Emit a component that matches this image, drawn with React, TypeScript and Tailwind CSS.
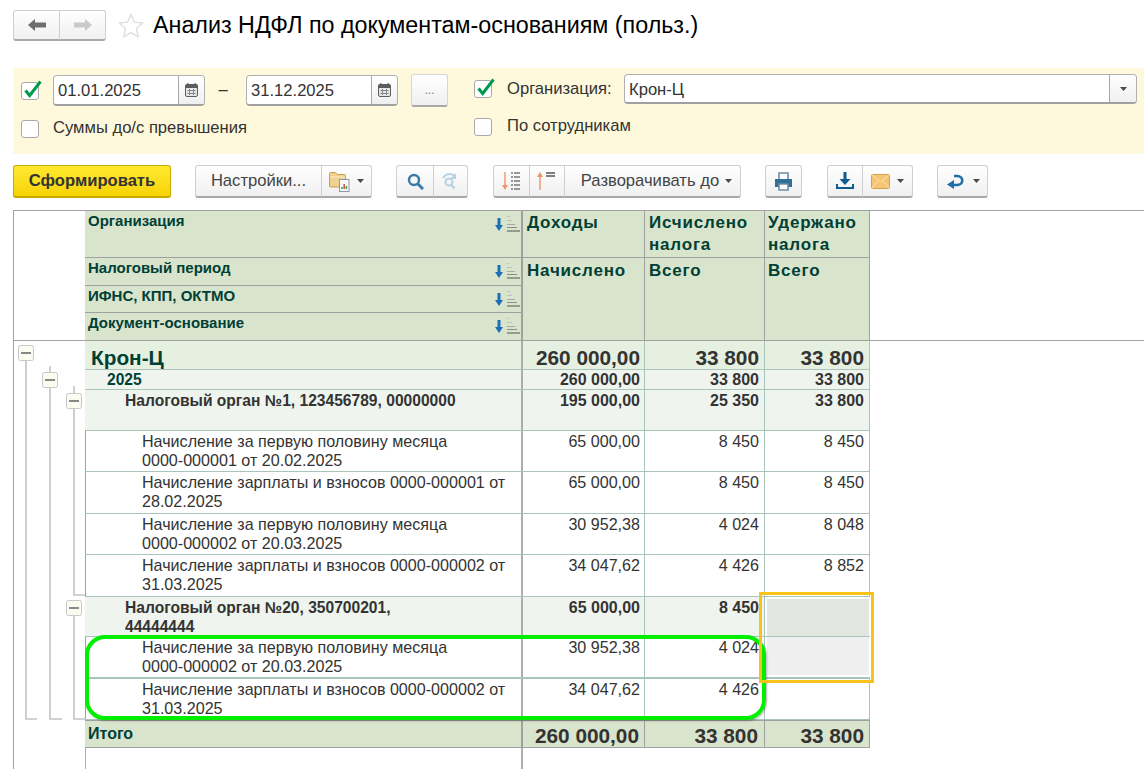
import type { ReactNode } from "react";

type Row = {
  label: string;
  values: [string, string, string];
  labelCls: string;
  rowCls: string;
  numCls: string;
  cellBg?: string;
};

const level0 = "text-[20.8px] font-bold text-[#333]";
const level1 = "text-[16px] font-bold text-[#333]";
const plain = "text-[16.1px] text-[#333]";
const docLabel = "pl-[56px] pt-[1px] text-[16.1px] text-[#333] border-l border-l-[#a0a0a0]";
const orgLabel = "pl-[40px] pt-[1px] text-[15.6px] font-bold text-[#333]";

const rows: Row[] = [
  { label: "Крон-Ц", values: ["260 000,00", "33 800", "33 800"], labelCls: "pl-[6px] pt-[7px] text-[20.8px] font-bold text-[#004035]", rowCls: "h-[29px] bg-[#e6f0e0]", numCls: `${level0} pt-[7px]` },
  { label: "2025", values: ["260 000,00", "33 800", "33 800"], labelCls: "pl-[22px] text-[15.6px] font-bold text-[#004035]", rowCls: "h-[20px] bg-[#eff5ee]", numCls: level1 },
  { label: "Налоговый орган №1, 123456789, 00000000", values: ["195 000,00", "25 350", "33 800"], labelCls: orgLabel, rowCls: "h-[41px] bg-[#eff5ee]", numCls: `${level1} pt-[1px]` },
  { label: "Начисление за первую половину месяца\n0000-000001 от 20.02.2025", values: ["65 000,00", "8 450", "8 450"], labelCls: docLabel, rowCls: "h-[41px] bg-white", numCls: `${plain} pt-[1px]` },
  { label: "Начисление зарплаты и взносов 0000-000001 от\n28.02.2025", values: ["65 000,00", "8 450", "8 450"], labelCls: docLabel, rowCls: "h-[42px] bg-white", numCls: `${plain} pt-[1px]` },
  { label: "Начисление за первую половину месяца\n0000-000002 от 20.03.2025", values: ["30 952,38", "4 024", "8 048"], labelCls: docLabel, rowCls: "h-[41px] bg-white", numCls: `${plain} pt-[1px]` },
  { label: "Начисление зарплаты и взносов 0000-000002 от\n31.03.2025", values: ["34 047,62", "4 426", "8 852"], labelCls: docLabel, rowCls: "h-[42px] bg-white", numCls: `${plain} pt-[1px]` },
  { label: "Налоговый орган №20, 350700201,\n44444444", values: ["65 000,00", "8 450", ""], labelCls: orgLabel, rowCls: "h-[40px] bg-[#eff5ee]", numCls: `${level1} pt-[1px]`, cellBg: "bg-[#e1e7e0] border-t-2 border-x-2 border-white" },
  { label: "Начисление за первую половину месяца\n0000-000002 от 20.03.2025", values: ["30 952,38", "4 024", ""], labelCls: docLabel, rowCls: "h-[42px] bg-white border-b-2!", numCls: `${plain} pt-[1px]`, cellBg: "bg-[#efefef] border-b-2 border-x-2 border-white" },
  { label: "Начисление зарплаты и взносов 0000-000002 от\n31.03.2025", values: ["34 047,62", "4 426", ""], labelCls: docLabel, rowCls: "h-[41px] bg-white", numCls: `${plain} pt-[1px]` },
];

function Btn({ w, children, className }: { w: string; children: ReactNode; className?: string }) {
  return (
    <div className={`${w} h-full flex items-center justify-center bg-linear-to-b from-white to-[#f0f0f0] border border-[#cfcfcf] border-b-2 border-b-[#a8a8a8] -ml-px first:ml-0 first:rounded-l-[3px] last:rounded-r-[3px] ${className ?? ""}`}>
      {children}
    </div>
  );
}

function Caret() {
  return (
    <svg width="7" height="4" viewBox="0 0 7 4" className="shrink-0">
      <path d="M0 0h7L3.5 4z" fill="#4a4a4a" />
    </svg>
  );
}

function Checkbox({ checked }: { checked?: boolean }) {
  return (
    <div className="relative w-[18px] h-[18px] shrink-0 rounded-[3px] bg-white border border-[#a9a9a9]">
      {checked && (
        <svg width="22" height="20" viewBox="0 0 22 20" className="absolute left-0 -top-[3px]">
          <path d="M3.500 10.500l4.200 5L18.500 1.500" fill="none" stroke="#009a4e" strokeWidth="3" />
        </svg>
      )}
    </div>
  );
}

function CalendarIcon() {
  return (
    <svg width="13" height="14" viewBox="0 0 13 14">
      <rect x="0.5" y="1.5" width="12" height="12" rx="1.5" fill="#e6e6e6" stroke="#5c5c5c" />
      <rect x="0.5" y="1.5" width="12" height="3.5" fill="#5c5c5c" />
      <path d="M3 0v2M10 0v2" stroke="#5c5c5c" strokeWidth="1.2" />
      <path d="M2.5 7.5h8M2.5 10.5h8M4.5 6v6M8.5 6v6" stroke="#8a8a8a" strokeWidth="1" />
    </svg>
  );
}

function DateField({ value }: { value: string }) {
  return (
    <div className="w-[152px] h-[31px] flex rounded-[4px] bg-white border border-[#b0b0b0] border-b-2 border-b-[#a0a0a0] overflow-hidden">
      <div className="flex-1 pl-[4px] leading-[30px] text-[#333]">{value}</div>
      <div className="w-[26px] flex items-center justify-center bg-linear-to-b from-white to-[#f0f0f0] border-l border-[#a8a8a8]">
        <CalendarIcon />
      </div>
    </div>
  );
}

function SortMark() {
  return (
    <svg width="26" height="17" viewBox="0 0 26 17" className="shrink-0">
      <path d="M5 3v9" stroke="#1b6fb5" strokeWidth="3" />
      <path d="M1 10h8l-4 6z" fill="#1b6fb5" />
      <path d="M13 1.500h3" stroke="#c4c4c4" />
      <path d="M13 5.500h5" stroke="#c0c0c0" />
      <path d="M13 9.500h8" stroke="#a8a8a8" />
      <path d="M13 12.500h10" stroke="#8c8c8c" />
      <path d="M13 16h13" stroke="#555" />
    </svg>
  );
}

function Hdr({ children, cls }: { children: ReactNode; cls: string }) {
  return (
    <div className={`flex justify-between pl-[3px] pr-px border-b border-[#a0a0a0] text-[15px] font-bold text-[#004035] ${cls}`}>
      <span className="leading-[16px] pt-[2px]">{children}</span>
      <div className="pt-[4px]">
        <SortMark />
      </div>
    </div>
  );
}

function TreeBox({ x, y }: { x: number; y: number }) {
  return (
    <g>
      <rect x={x + 0.5} y={y + 0.5} width="15" height="15" rx="2" fill="#fcfbf0" stroke="#c8c8c8" />
      <path d={`M${x + 3} ${y + 8}h10`} stroke="#6a6a6a" strokeWidth="1.6" />
    </g>
  );
}

function Tree() {
  return (
    <svg width="71" height="428" viewBox="14 341 71 428" className="shrink-0">
      <g fill="none" stroke="#c4c4c4" strokeWidth="1.6">
        <path d="M26 361V719H37" />
        <path d="M50 366V719H62" />
        <path d="M74 386V595H85" />
        <path d="M74 612V719H85" />
      </g>
      <TreeBox x={18} y={345} />
      <TreeBox x={42} y={372} />
      <TreeBox x={66} y={393} />
      <TreeBox x={66} y={600} />
    </svg>
  );
}

export default function App() {
  return (
    <div className="relative w-[1144px] h-[769px] overflow-hidden bg-white font-['Liberation_Sans',sans-serif]">
      {/* title */}
      <div className="h-[68px] pl-[13px] pt-[10px] flex items-start">
        <div className="flex h-[31px] w-[93px]">
          <Btn w="w-[47px]">
            <svg width="18" height="12" viewBox="0 0 18 12">
              <path d="M0 6l7-6v3.5h11v5H7V12z" fill="#6e6e6e" />
            </svg>
          </Btn>
          <Btn w="w-[47px]">
            <svg width="18" height="12" viewBox="0 0 18 12">
              <path d="M18 6l-7-6v3.5H0v5h11V12z" fill="#c9c9c9" />
            </svg>
          </Btn>
        </div>
        <svg width="26" height="26" viewBox="0 0 26 26" className="ml-[12px] mt-[3px]">
          <path d="M13 1.5l3.4 7.6 8.1.9-6 5.6 1.7 8.2-7.2-4.2-7.2 4.2 1.7-8.2-6-5.6 8.1-.9z" fill="#fff" stroke="#dedede" strokeWidth="1.4" />
        </svg>
        <h1 className="ml-[9px] text-[23.3px] leading-[32px] text-black -mt-[1px]">Анализ НДФЛ по документам-основаниям (польз.)</h1>
      </div>

      {/* filter panel */}
      <div className="ml-[13px] h-[86px] bg-[#fef9dc] flex text-[16.6px] text-[#333]">
        <div className="w-[461px] pl-[8px]">
          <div className="flex items-start mt-[7px]">
            <div className="pt-[7px] w-[32px]">
              <Checkbox checked />
            </div>
            <DateField value="01.01.2025" />
            <div className="w-[41px] pr-[5px] text-center leading-[30px]">–</div>
            <DateField value="31.12.2025" />
            <div className="ml-[13px] -mt-px w-[37px] h-[33px] flex items-center justify-center bg-linear-to-b from-white to-[#f0f0f0] border border-[#d6d6d6] border-b-2 border-b-[#a8a8a8] rounded-[3px] text-[12px] text-[#777]">
              ...
            </div>
          </div>
          <div className="flex items-center mt-[10px]">
            <div className="w-[32px]">
              <Checkbox />
            </div>
            <span className="-mt-[1px]">Суммы до/с превышения</span>
          </div>
        </div>
        <div className="flex-1">
          <div className="flex items-start mt-[6px]">
            <div className="pt-[6px] w-[33px]">
              <Checkbox checked />
            </div>
            <span className="leading-[29px] w-[117px]">Организация:</span>
            <div className="w-[513px] h-[30px] flex rounded-[4px] bg-white border border-[#b0b0b0] border-b-2 border-b-[#a0a0a0] overflow-hidden">
              <div className="flex-1 pl-[4px] leading-[29px]">Крон-Ц</div>
              <div className="w-[27px] flex items-center justify-center bg-linear-to-b from-white to-[#f0f0f0] border-l border-[#a8a8a8]">
                <Caret />
              </div>
            </div>
          </div>
          <div className="flex items-center mt-[11px]">
            <div className="w-[33px]">
              <Checkbox />
            </div>
            <span className="-mt-[1px]">По сотрудникам</span>
          </div>
        </div>
      </div>

      {/* toolbar */}
      <div className="ml-[13px] mt-[11px] h-[33px] flex text-[16.6px] text-[#444]">
        <div className="w-[158px] h-full flex items-center justify-center rounded-[3px] bg-linear-to-b from-[#ffe92e] to-[#f7d300] border border-[#c9a800] border-b-2 font-bold text-[#333]">
          <span className="pt-[1px]">Сформировать</span>
        </div>
        <div className="flex h-full ml-[24px]">
          <Btn w="w-[127px]">
            <span className="pt-[1px]">Настройки...</span>
          </Btn>
          <Btn w="w-[51px]" className="gap-[7px]">
            <svg width="21" height="21" viewBox="0 0 21 21">
              <path d="M0.500 2.500a1 1 0 0 1 1-1h5l2 2h7a1 1 0 0 1 1 1V16H1.500a1 1 0 0 1-1-1z" fill="#efd08c" stroke="#c9a04e" />
              <path d="M1 6h15" stroke="#f7e4b5" strokeWidth="1.500" />
              <rect x="10.500" y="8.500" width="9.500" height="12" fill="#f7f7f7" stroke="#8d9aa6" />
              <path d="M13 18v-2" stroke="#3f9a5b" strokeWidth="1.500" />
              <path d="M15.200 18v-5" stroke="#c8553d" strokeWidth="1.500" />
              <path d="M17.400 18v-3" stroke="#3f9a5b" strokeWidth="1.500" />
            </svg>
            <Caret />
          </Btn>
        </div>
        <div className="flex h-full ml-[24px]">
          <Btn w="w-[38px]">
            <svg width="17" height="17" viewBox="0 0 17 17">
              <circle cx="7" cy="7" r="5" fill="none" stroke="#3a7ca8" strokeWidth="2.400" />
              <path d="M10.500 10.500L16 16" stroke="#3a7ca8" strokeWidth="3" />
            </svg>
          </Btn>
          <Btn w="w-[35px]">
            <svg width="20" height="17" viewBox="0 0 20 17">
              <path d="M2 5c3-5 9-5 12-1" fill="none" stroke="#b5d3e3" strokeWidth="2" />
              <path d="M15 0v6h-6z" fill="#b5d3e3" />
              <circle cx="8" cy="9" r="3.500" fill="none" stroke="#b5d3e3" strokeWidth="2" />
              <path d="M10.500 12l3 3.500" stroke="#b5d3e3" strokeWidth="2.400" />
            </svg>
          </Btn>
        </div>
        <div className="flex h-full ml-[25px]">
          <Btn w="w-[37px]">
            <svg width="20" height="20" viewBox="0 0 20 20">
              <path d="M3 1v15" stroke="#f0936a" strokeWidth="1.400" />
              <path d="M0 14h6l-3 5z" fill="#f0936a" />
              <path d="M9 2h9M9 6h9M9 10h9M9 14h9M9 18h9" stroke="#777" strokeWidth="1.500" strokeDasharray="2 1 8" />
            </svg>
          </Btn>
          <Btn w="w-[36px]">
            <svg width="20" height="20" viewBox="0 0 20 20">
              <path d="M3 19V4" stroke="#f0936a" strokeWidth="1.400" />
              <path d="M0 6h6L3 1z" fill="#f0936a" />
              <path d="M9 2h9M9 5h9" stroke="#555" strokeWidth="1.600" />
            </svg>
          </Btn>
          <Btn w="w-[177px]" className="gap-[6px] pl-[8px]">
            <span className="pt-[1px]">Разворачивать до</span>
            <Caret />
          </Btn>
        </div>
        <div className="flex h-full ml-[24px]">
          <Btn w="w-[37px]">
            <svg width="19" height="19" viewBox="0 0 19 19">
              <path d="M5 7V1h9v6" fill="#fff" stroke="#6f8ba3" strokeWidth="1.600" />
              <path d="M1 7h17v8H1z" fill="#2f6f99" />
              <path d="M5 12h9v6H5z" fill="#fff" stroke="#6f8ba3" strokeWidth="1.600" />
            </svg>
          </Btn>
        </div>
        <div className="flex h-full ml-[25px]">
          <Btn w="w-[36px]">
            <svg width="18" height="18" viewBox="0 0 18 18">
              <path d="M9 0v8" stroke="#0f5c91" strokeWidth="3" />
              <path d="M3.500 7h11L9 13z" fill="#0f5c91" />
              <path d="M1 12v4h16v-4" fill="none" stroke="#0f5c91" strokeWidth="2" />
            </svg>
          </Btn>
          <Btn w="w-[51px]" className="gap-[7px]">
            <svg width="19" height="15" viewBox="0 0 19 15">
              <rect x="0.500" y="0.500" width="18" height="14" rx="1" fill="#f4c674" stroke="#d9a24f" />
              <path d="M1 1l8.500 7L18 1M1 14l6-7M18 14l-6-7" fill="none" stroke="#fbe3ad" />
            </svg>
            <Caret />
          </Btn>
        </div>
        <div className="flex h-full ml-[24px]">
          <Btn w="w-[51px]" className="gap-[9px]">
            <svg width="18" height="16" viewBox="0 0 18 16">
              <path d="M7 12h4c7 0 7-9 0-9H8" fill="none" stroke="#1f6ea6" strokeWidth="2.600" />
              <path d="M8 7v9L1 11.500z" fill="#1f6ea6" />
            </svg>
            <Caret />
          </Btn>
        </div>
      </div>

      {/* report */}
      <div className="ml-[13px] mt-[12px] border-l border-[#a0a0a0]">
        <div className="flex h-[131px] border-y border-[#a0a0a0]">
          <div className="w-[71px] shrink-0" />
          <div className="w-[438px] shrink-0 flex flex-col bg-[#d9e4cc] border-r-2 border-[#a0a0a0]">
            <Hdr cls="h-[47px]">Организация</Hdr>
            <Hdr cls="h-[28px]">Налоговый период</Hdr>
            <Hdr cls="h-[27px]">ИФНС, КПП, ОКТМО</Hdr>
            <div className="flex-1 flex justify-between pl-[3px] pr-px text-[15px] font-bold text-[#004035]">
              <span className="leading-[16px] pt-[2px]">Документ-основание</span>
              <div className="pt-[4px]">
                <SortMark />
              </div>
            </div>
          </div>
          {[
            { w: "w-[122px] pl-[4px]", top: "Доходы", bottom: "Начислено" },
            { w: "w-[120px] pl-[4px]", top: "Исчислено\nналога", bottom: "Всего" },
            { w: "w-[105px] pl-[3px]", top: "Удержано\nналога", bottom: "Всего" },
          ].map((c) => (
            <div key={c.top} className={`${c.w} shrink-0 flex flex-col bg-[#d9e4cc] border-r border-[#a0a0a0] text-[17px] leading-[22px] tracking-[0.8px] font-bold text-[#004035]`}>
              <div className="h-[47px] -ml-[4px] pl-[4px] pt-px whitespace-pre-line border-b border-[#a0a0a0]">{c.top}</div>
              <div className="flex-1 pt-[2px]">{c.bottom}</div>
            </div>
          ))}
        </div>

        <div className="flex h-[429px]">
          <Tree />
          <div className="w-[785px] shrink-0 flex flex-col">
            {rows.map((r, i) => (
              <div key={i} className={`flex shrink-0 border-b border-[#a9c4ba] ${r.rowCls}`}>
                <div className={`w-[438px] shrink-0 leading-[19px] whitespace-pre-line border-r-2 border-r-[#adadad] ${r.labelCls}`}>{r.label}</div>
                <div className={`w-[122px] shrink-0 text-right pr-[4px] leading-[19px] border-r border-[#a9c4ba] ${r.numCls}`}>{r.values[0]}</div>
                <div className={`w-[120px] shrink-0 text-right pr-[5px] leading-[19px] border-r border-[#a9c4ba] ${r.numCls}`}>{r.values[1]}</div>
                <div className={`w-[105px] shrink-0 text-right pr-[5px] leading-[19px] border-r border-[#a9c4ba] ${r.numCls} ${r.cellBg ?? ""}`}>{r.values[2]}</div>
              </div>
            ))}
            <div className="flex h-[28px] shrink-0 bg-[#d9e4cc] border-y border-[#a0a0a0]">
              <div className="w-[438px] shrink-0 pl-[3px] pt-[2px] text-[16px] leading-[22px] font-bold text-[#004035] border-r-2 border-[#a0a0a0]">Итого</div>
              <div className={`w-[122px] shrink-0 text-right pr-[5px] pt-[1px] leading-[28px] border-r border-[#a0a0a0] ${level0}`}>260 000,00</div>
              <div className={`w-[120px] shrink-0 text-right pr-[6px] pt-[1px] leading-[28px] border-r border-[#a0a0a0] ${level0}`}>33 800</div>
              <div className={`w-[105px] shrink-0 text-right pr-[5px] pt-[1px] leading-[28px] border-r border-[#a0a0a0] ${level0}`}>33 800</div>
            </div>
            <div className="flex-1 flex">
              <div className="w-[438px] border-l border-r-2 border-[#adadad]" />
            </div>
          </div>
        </div>
      </div>

      {/* hand-drawn marks over the report */}
      <div className="absolute left-[85px] top-[635px] w-[681px] h-[85px] rounded-[20px] border-[4px] border-[#00ee00] shadow-[1px_1px_2px_rgba(0,0,0,0.3)]" />
      <div className="absolute left-[759px] top-[592px] w-[115px] h-[91px] border-[3px] border-[#fac31c]" />
    </div>
  );
}
